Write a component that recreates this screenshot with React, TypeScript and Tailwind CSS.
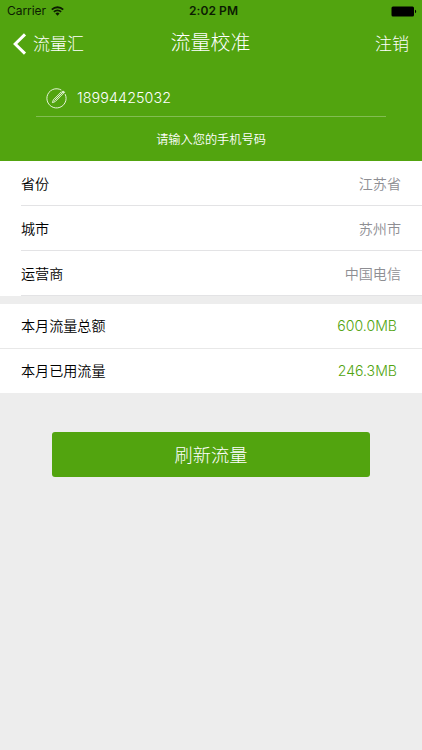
import clsx from "clsx";

const regionRows = [
  { label: "省份", value: "江苏省" },
  { label: "城市", value: "苏州市" },
  { label: "运营商", value: "中国电信" },
];

const usageRows = [
  { label: "本月流量总额", value: "600.0MB" },
  { label: "本月已用流量", value: "246.3MB" },
];

function StatusBar() {
  return (
    <div className="grid h-[22px] grid-cols-3 items-center pl-[7px] pr-[5px] text-[12px] leading-[22px] text-[#0c1c02]">
      <div className="flex items-center gap-[5px]">
        <span className="tracking-[-0.05px]">Carrier</span>
        <svg width="13" height="10" viewBox="0 0 13 10" fill="none" stroke="currentColor" strokeWidth="1.8">
          <path d="M0.8 3.6a8.1 8.1 0 0 1 11.4 0" />
          <path d="M2.9 5.8a5.1 5.1 0 0 1 7.2 0" />
          <path d="M6.5 9.7 4.4 7.5a2.9 2.9 0 0 1 4.2 0z" fill="currentColor" stroke="none" />
        </svg>
      </div>
      <span className="pl-[3px] text-center font-semibold tracking-[0.1px]">2:02 PM</span>
      <svg className="justify-self-end" width="26" height="11" viewBox="0 0 26 11">
        <rect x="0.5" y="0.5" width="22.5" height="10" rx="1.5" fill="#000" />
        <path d="M24 3.8c1.6.3 1.6 3.1 0 3.4z" fill="#000" />
      </svg>
    </div>
  );
}

function NavBar() {
  return (
    <div className="grid h-[43px] grid-cols-3 items-center pl-3 pr-[13px] text-[17px] font-light leading-[42px]">
      <button className="flex items-center gap-[6px] pt-px">
        <svg width="15" height="22" viewBox="0 0 15 22" fill="none" stroke="#fff" strokeWidth="3">
          <path d="M13 1.4 3.2 11 13 20.6" />
        </svg>
        <span>流量汇</span>
      </button>
      <h1 className="pb-px text-center text-[20px]">流量校准</h1>
      <button className="pt-px text-right">注销</button>
    </div>
  );
}

function PhoneField() {
  return (
    <div className="mx-9 mt-[15px]">
      <div className="flex h-[37px] items-center gap-[10px] border-b border-[#82bd52] pl-[10px]">
        <svg className="mt-px" width="21" height="21" viewBox="0 0 21 21" fill="none" stroke="#e4f3d8" strokeWidth="1">
          <path d="M15.4 2.1a9.6 9.6 0 1 0 3.7 4" />
          <path d="m6.4 14.6 1-2.8 8-8 1.8 1.8-8 8z" />
          <path d="m8.4 12.6 7.8-7.8" />
          <path d="m16.2 3.9 1-1 1.4 1.4-1 1z" fill="#e4f3d8" />
        </svg>
        <span className="text-[14.3px] font-[350] tracking-[0.1px]">18994425032</span>
      </div>
      <p className="mt-[13px] text-center text-[12.2px] font-[350] leading-5">请输入您的手机号码</p>
    </div>
  );
}

export default function App() {
  return (
    <div className="flex min-h-[750px] w-[422px] flex-col bg-[#ededed] font-[Inter,'Noto_Sans_CJK_SC',sans-serif]">
      <header className="h-[161px] bg-[#52a40f] text-white">
        <StatusBar />
        <NavBar />
        <PhoneField />
      </header>

      <section className="bg-white pl-[21px] text-[14.1px] font-[350]">
        {regionRows.map((row) => (
          <div
            key={row.label}
            className="flex h-[45px] items-center justify-between border-b border-[#e3e3e5] pr-[21px] pt-[2px]"
          >
            <span className="text-black">{row.label}</span>
            <span className="text-[#8e8e93]">{row.value}</span>
          </div>
        ))}
      </section>

      <section className="mt-2 bg-white text-[14.1px] font-[350]">
        {usageRows.map((row, i) => (
          <div
            key={row.label}
            className={clsx(
              "flex items-center justify-between pl-[21px] pr-[25px]",
              i === 0 ? "h-[45px] border-b border-[#e8e8e8]" : "h-11"
            )}
          >
            <span className="text-black">{row.label}</span>
            <span className="text-[#52a40f]">{row.value}</span>
          </div>
        ))}
      </section>

      <button className="mx-[52px] mt-[39px] h-[45px] rounded-[3px] bg-[#52a40f] pt-[2px] text-[18.2px] font-light text-white">
        刷新流量
      </button>
    </div>
  );
}
